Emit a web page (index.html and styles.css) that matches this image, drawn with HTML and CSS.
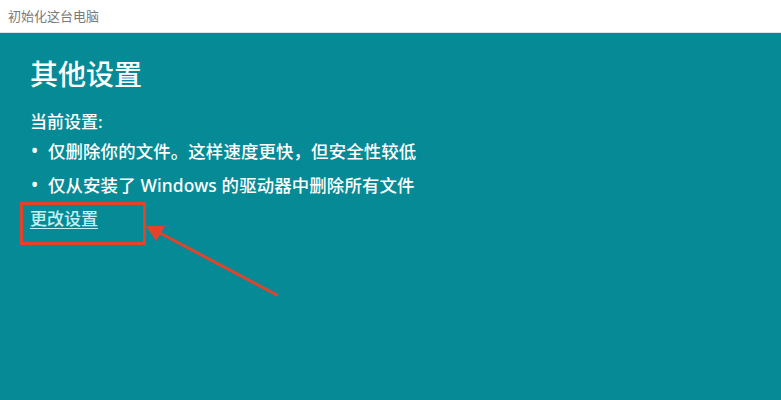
FILE: index.html
```
<!DOCTYPE html>
<html lang="zh-CN">
<head>
<meta charset="utf-8">
<title>初始化这台电脑</title>
<link rel="stylesheet" href="styles.css">
</head>
<body>
<header class="titlebar">初始化这台电脑</header>
<main class="panel">
  <h1 class="title">其他设置</h1>
  <p class="label">当前设置:</p>
  <ul class="list">
    <li class="item"><span class="dot">•</span><span>仅删除你的文件。这样速度更快，但安全性较低</span></li>
    <li class="item"><span class="dot">•</span><span>仅从安装了 Windows 的驱动器中删除所有文件</span></li>
  </ul>
  <a class="link" href="#">更改设置</a>
</main>
<svg class="annot" width="781" height="400" viewBox="0 0 781 400">
  <rect x="21.5" y="203.5" width="123" height="40" fill="none" stroke="#e2432a" stroke-width="3"/>
  <line x1="277" y1="295" x2="158" y2="232" stroke="#e2432a" stroke-width="3" stroke-linecap="round"/>
  <polygon points="146,226 165,226 156,241" fill="#e2432a"/>
</svg>
</body>
</html>
```
FILE: styles.css
```
html, body {
  margin: 0;
  padding: 0;
  height: 100%;
}
body {
  width: 781px;
  height: 400px;
  overflow: hidden;
  position: relative;
  background: #068b96;
  font-family: "Noto Sans", "Noto Sans CJK SC", sans-serif;
}
.titlebar {
  height: 33px;
  box-sizing: border-box;
  background: #ffffff;
  color: #7a7a7a;
  font-size: 13px;
  line-height: 32px;
  padding-left: 8px;
  border-bottom: 1px solid #d8e4e5;
}
.panel {
  background: #068b96;
  padding: 23px 0 0 30px;
  color: #ffffff;
}
.title {
  margin: 0;
  font-size: 28px;
  font-weight: 500;
  line-height: 36px;
}
.label {
  margin: 18px 0 0;
  font-size: 17px;
  font-weight: 500;
  line-height: 24px;
}
.list {
  list-style: none;
  margin: 0;
  padding: 0;
}
.item {
  display: flex;
  font-size: 17.4px;
  font-weight: 500;
  line-height: 34px;
  letter-spacing: 0.15px;
}
.dot {
  width: 18px;
  padding-left: 1px;
  box-sizing: border-box;
  font-size: 19px;
}
.link {
  display: block;
  font-size: 17px;
  font-weight: 500;
  line-height: 34px;
  color: #c4f1f5;
  text-decoration: underline;
  text-underline-offset: 3px;
  width: max-content;
}
.annot {
  position: absolute;
  left: 0;
  top: 0;
  pointer-events: none;
}
```
